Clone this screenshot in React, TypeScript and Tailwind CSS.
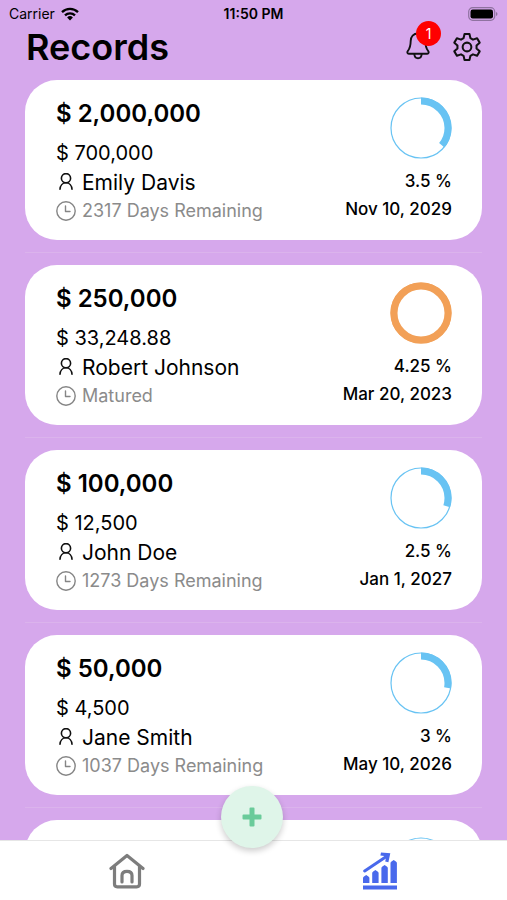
import React from 'react';

interface RecordItem {
  total: string;
  amount: string;
  name: string;
  status: string;
  progress: number;
  rate: string;
  date: string;
}

const records: RecordItem[] = [
  { total: '$ 2,000,000', amount: '$ 700,000', name: 'Emily Davis', status: '2317 Days Remaining', progress: 0.36, rate: '3.5 %', date: 'Nov 10, 2029' },
  { total: '$ 250,000', amount: '$ 33,248.88', name: 'Robert Johnson', status: 'Matured', progress: 1, rate: '4.25 %', date: 'Mar 20, 2023' },
  { total: '$ 100,000', amount: '$ 12,500', name: 'John Doe', status: '1273 Days Remaining', progress: 0.3, rate: '2.5 %', date: 'Jan 1, 2027' },
  { total: '$ 50,000', amount: '$ 4,500', name: 'Jane Smith', status: '1037 Days Remaining', progress: 0.28, rate: '3 %', date: 'May 10, 2026' },
];

const ProgressRing: React.FC<{ progress: number }> = ({ progress }) => {
  const color = progress >= 1 ? '#f2a057' : '#68c3f3';
  return (
    <svg viewBox="0 0 62 62" className="size-[62px]" fill="none" stroke={color}>
      <circle cx="31" cy="31" r="30" strokeWidth="1.2" />
      <circle
        cx="31"
        cy="31"
        r="27"
        strokeWidth="7"
        pathLength="100"
        strokeDasharray={`${progress * 100} 100`}
        transform="rotate(-90 31 31)"
      />
    </svg>
  );
};

const PersonIcon = () => (
  <svg viewBox="0 0 20 20" className="size-5 shrink-0" fill="none" stroke="#111" strokeWidth="1.6" strokeLinecap="round">
    <circle cx="10" cy="5.2" r="4.6" />
    <path d="M4 16.200c.2-3.400 2.500-6.400 6-6.400s5.800 3 6 6.400" />
  </svg>
);

const ClockIcon = () => (
  <svg viewBox="0 0 20 20" className="size-5 shrink-0" fill="none" stroke="#858585" strokeWidth="1.4" strokeLinecap="round" strokeLinejoin="round">
    <circle cx="10" cy="10" r="9.200" />
    <path d="M9.500 5v5.500h4.500" />
  </svg>
);

const RecordCard: React.FC<{ record: RecordItem }> = ({ record }) => (
  <li className="flex justify-between rounded-[32px] bg-white pt-[17px] pr-[30px] pb-[17px] pl-[31px]">
    <div className="whitespace-nowrap">
      <h2 className="text-2xl leading-[34px] font-semibold">{record.total}</h2>
      <p className="mt-2 text-xl leading-7">{record.amount}</p>
      <p className="flex items-center gap-1.5 text-[21px] leading-8">
        <PersonIcon />
        {record.name}
      </p>
      <p className="flex items-center gap-1.5 text-lg leading-6 text-[#8b8b8b]">
        <ClockIcon />
        {record.status}
      </p>
    </div>
    <div className="flex flex-col items-end whitespace-nowrap text-[17px] leading-7 font-medium">
      <ProgressRing progress={record.progress} />
      <p className="mt-2">{record.rate}</p>
      <p>{record.date}</p>
    </div>
  </li>
);

const StatusBar = () => (
  <div className="grid h-7 grid-cols-3 items-center px-[9px] text-sm">
    <div className="flex items-center gap-1.5">
      <span>Carrier</span>
      <svg viewBox="0 0 18 14" className="h-3.5 w-[18px]" fill="none" stroke="#000" strokeWidth="2.300">
        <path d="M1 5.200a11.500 11.500 0 0 1 16 0" />
        <path d="M4 8.300a7.200 7.200 0 0 1 10 0" />
        <path d="M9 13.500 6.100 10.500a4.200 4.200 0 0 1 5.800 0z" fill="#000" stroke="none" />
      </svg>
    </div>
    <span className="text-center font-semibold">11:50 PM</span>
    <svg viewBox="0 0 30 14" className="h-3.5 w-[30px] justify-self-end">
      <rect x=".7" y=".7" width="26" height="12.600" rx="4" fill="none" stroke="#8f72a0" strokeWidth="1.200" />
      <rect x="2.500" y="2.500" width="22.500" height="9" rx="2.200" />
      <path d="M28 5v4c2-.8 2-3.200 0-4z" fill="#8f72a0" />
    </svg>
  </div>
);

const Header = () => (
  <header className="flex h-[52px] items-start justify-between pr-[25px] pl-[26px]">
    <h1 className="text-4xl leading-[38px] font-semibold">Records</h1>
    <div className="flex h-[38px] items-center gap-5">
      <button type="button" aria-label="Notifications" className="relative">
        <svg viewBox="0 2 28 30" className="h-[30px] w-7" fill="none" stroke="#111" strokeWidth="1.900" strokeLinejoin="round">
          <path d="M14 3.500c-4.600 0-7.200 3.300-7.300 7.500-.1 5-.9 7.600-2.800 9.800-1.100 1.300-.6 3 .9 3h18.400c1.500 0 2-1.700.9-3-1.900-2.200-2.700-4.800-2.800-9.800-.1-4.200-2.700-7.500-7.300-7.500z" />
          <path d="M10.300 24c.2 2.800 1.600 4.300 3.700 4.300s3.500-1.500 3.700-4.300" />
        </svg>
        <span className="absolute -top-[11px] left-3 flex size-[25px] items-center justify-center rounded-full bg-[#ff0000] text-sm text-white">1</span>
      </button>
      <button type="button" aria-label="Settings">
        <svg viewBox="1 .1 22 22" className="size-[30px]" fill="none" stroke="#111" strokeWidth="1.500" strokeLinejoin="round">
          <path d="M10.200 1.500h3.600l.7 3.100 1.900 1.100 3-1 1.900 3.200-2.300 2.100v2.200l2.300 2.100-1.900 3.200-3-1-1.900 1.100-.7 3.100h-3.600l-.7-3.100-1.900-1.100-3 1-1.900-3.200L5 12.200V10L2.700 7.900l1.900-3.200 3 1 1.900-1.100z" />
          <circle cx="12" cy="11.100" r="3.200" />
        </svg>
      </button>
    </div>
  </header>
);

const BottomNav = () => (
  <nav className="relative grid h-[60px] shrink-0 grid-cols-2 border-t border-[#e6e6e6] bg-white">
    <a href="#home" aria-label="Home" className="flex items-center justify-center">
      <svg viewBox="0 0 36 36" className="size-9" fill="none" stroke="#7d7d7d" strokeWidth="3.200" strokeLinecap="round" strokeLinejoin="round">
        <path d="M2 15.500 18 2.500l16 13" />
        <path d="M5.500 13.500V31c0 1.700 1 2.800 2.800 2.800h19.400c1.800 0 2.800-1.100 2.800-2.800V13.500" />
        <path d="M13 29v-6.500c0-2.600 2-4.200 5-4.200s5 1.600 5 4.200V29" />
      </svg>
    </a>
    <a href="#records" aria-label="Records" className="flex items-center justify-center">
      <svg viewBox="0 0 34 38" className="h-[38px] w-[34px]" fill="#4969ec">
        <path d="M0 33.500h34v4H0zM0 31v-5q0-1 1-1.500l2.200-1.500 2.200 1.500q1 .5 1 1.500v5zM9.200 31V21q0-1 1-1.500l2.200-1.500 2.200 1.500q1 .5 1 1.500v10zM18.400 31V16q0-1 1-1.500l2.200-1.500 2.200 1.500q1 .5 1 1.500v15zM27.500 31V11q0-1 1-1.500l2.200-1.500 2.200 1.500q1 .5 1 1.500v20z" />
        <path d="M1.700 19 24.500 3.800" fill="none" stroke="#4969ec" strokeWidth="3" strokeLinecap="round" />
        <path d="m18 .5 9.300.8-1.900 9-3.200-.8.700-3.200-1.600-2.400-3.900-.4z" />
      </svg>
    </a>
    <button
      type="button"
      aria-label="Add record"
      className="absolute bottom-[52px] left-[43.5%] flex size-[62px] items-center justify-center rounded-full bg-[#dff5e9] shadow-[0_3px_6px_#00000033]"
    >
      <svg viewBox="0 0 20 20" className="size-5" fill="#6acb9a">
        <path d="M8.500.5h3a1 1 0 0 1 1 1v6h6a1 1 0 0 1 1 1v3a1 1 0 0 1-1 1h-6v6a1 1 0 0 1-1 1h-3a1 1 0 0 1-1-1v-6h-6a1 1 0 0 1-1-1v-3a1 1 0 0 1 1-1h6v-6a1 1 0 0 1 1-1z" />
      </svg>
    </button>
  </nav>
);

const App: React.FC = () => {
  return (
    <div className="flex h-screen flex-col bg-[#d6a8ec] font-['Inter','Noto_Sans',sans-serif] text-black">
      <StatusBar />
      <Header />
      <main className="min-h-0 flex-1 overflow-y-auto px-[25px] [scrollbar-width:none]">
        <ul>
          {records.map((record) => (
            <React.Fragment key={record.name}>
              <RecordCard record={record} />
              <li aria-hidden="true" className="my-3 h-px bg-[#dbb3ec]" />
            </React.Fragment>
          ))}
          {/* Next record, still loading */}
          <li className="flex h-40 justify-end rounded-[32px] bg-white pt-[17px] pr-[30px]">
            <ProgressRing progress={0} />
          </li>
        </ul>
      </main>
      <BottomNav />
    </div>
  );
};

export default App;
